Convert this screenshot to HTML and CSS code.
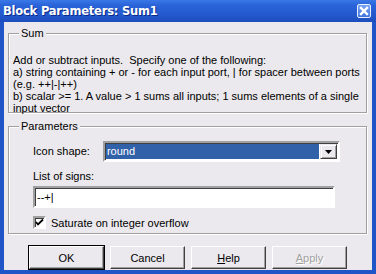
FILE: index.html
```html
<!DOCTYPE html>
<html>
  <head>
    <meta charset="utf-8">
    <title>Block Parameters: Sum1</title>
    <link rel="stylesheet" href="styles.css">
  </head>
  <body>
    <div class="window">
      <div class="titlebar">
        <span class="title">Block Parameters: Sum1</span>
        <span class="close">
          <svg width="12" height="12" viewBox="0 0 12 12">
            <path d="M3 3 L9 9 M9 3 L3 9" stroke="#fff" stroke-width="2.4" stroke-linecap="square"/>
          </svg>
        </span>
      </div>

      <div class="client">
        <div class="group sum">
          <span class="legend">Sum</span>
          <p class="desc">Add or subtract inputs.&nbsp; Specify one of the following:<br>
          a) string containing + or - for each input port, | for spacer between ports<br>
          (e.g. ++|-|++)<br>
          b) scalar &gt;= 1. A value &gt; 1 sums all inputs; 1 sums elements of a single<br>
          input vector</p>
        </div>

        <div class="group params">
          <span class="legend">Parameters</span>
          <div class="row">
            <span class="label">Icon shape:</span>
            <div class="combo">
              <span class="combo-value">round</span>
              <span class="combo-btn">
                <svg width="7" height="4" viewBox="0 0 7 4"><path d="M0 0 H7 L3.5 4 Z" fill="#000"/></svg>
              </span>
            </div>
          </div>
          <div class="label signs">List of signs:</div>
          <div class="edit">--+|</div>
          <label class="check">
            <span class="box">
              <svg width="9" height="9" viewBox="0 0 9 9"><path d="M1 4 L3 6.5 L8 1.5" stroke="#000" stroke-width="1.8" fill="none"/></svg>
            </span>
            Saturate on integer overflow
          </label>
        </div>

        <div class="buttons">
          <button class="btn default">OK</button>
          <button class="btn">Cancel</button>
          <button class="btn"><u>H</u>elp</button>
          <button class="btn disabled"><u>A</u>pply</button>
        </div>
      </div>
    </div>
  </body>
</html>
```

FILE: styles.css
```css
body { margin: 0; font-family: "Liberation Sans", Arial, sans-serif; font-size: 11px; color: #000; }
.window { width: 376px; height: 274px; box-sizing: border-box; border: 0 solid #1f55c6; border-width: 0 4px 4px 4px; display: flex; flex-direction: column; }
.titlebar { height: 22px; display: flex; align-items: center; justify-content: space-between; margin: 0 -4px; padding: 0 5px 0 3px; background: linear-gradient(#3a78e8 0%, #2a63d8 25%, #2358cc 70%, #1d4dbd 100%); }
.title { color: #fff; font-family: "DejaVu Sans", sans-serif; font-weight: bold; font-size: 11.5px; letter-spacing: -0.2px; text-shadow: 1px 1px 0 #0a2a8a; }
.close { width: 14px; height: 14px; box-sizing: border-box; border: 1px solid #e8eefc; border-radius: 2px; background: linear-gradient(#7aa4f4, #3f74de); display: flex; align-items: center; justify-content: center; }
.client { flex: 1; background: #ebe9ed; padding: 11px 5px 0 4px; }
.group { border: 1px solid #a0a0a0; box-shadow: inset 1px 1px 0 #fff, 1px 1px 0 #fff; box-sizing: border-box; padding: 0 4px; }
.legend { display: inline-block; margin: -7px 0 0 6px; padding: 0 2px; line-height: 13px; background: #ebe9ed; vertical-align: top; }
.sum { height: 80px; }
.desc { margin: 8px 0 0 0; line-height: 12px; }
.params { margin-top: 13px; height: 108px; padding-left: 24px; }
.params .legend { margin-left: -14px; }
.row { display: flex; align-items: center; gap: 13px; margin-top: 2px; }
.label { line-height: 13px; }
.signs { margin-top: 8px; }
.combo { width: 237px; height: 21px; box-sizing: border-box; border: 2px solid; border-color: #a0a0a0 #fff #fff #a0a0a0; box-shadow: inset 1px 1px 0 #404040; display: flex; padding: 1px; background: #fff; }
.combo-value { flex: 1; background: #3161a9; color: #fff; padding-left: 1px; line-height: 15px; margin-right: 1px; }
.combo-btn { width: 17px; display: flex; align-items: center; justify-content: center; background: #ebe9ed; box-sizing: border-box; border: 1px solid; border-color: #ebe9ed #404040 #404040 #ebe9ed; box-shadow: inset 1px 1px 0 #fff, inset -1px -1px 0 #a0a0a0; }
.edit { width: 302px; height: 22px; box-sizing: border-box; margin-top: 3px; border: 2px solid; border-color: #a0a0a0 #fff #fff #a0a0a0; box-shadow: inset 1px 1px 0 #404040; background: #fff; padding: 3px 2px; line-height: 13px; }
.check { display: flex; align-items: center; gap: 5px; margin-top: 8px; }
.box { width: 13px; height: 13px; box-sizing: border-box; border: 2px solid; border-color: #a0a0a0 #fff #fff #a0a0a0; box-shadow: inset 1px 1px 0 #404040; background: #fff; display: flex; align-items: center; justify-content: center; }
.buttons { display: flex; gap: 6px; margin-top: 12px; padding-left: 21px; }
.btn { width: 75px; height: 23px; font: inherit; color: #000; background: #ebe9ed; border: 1px solid; border-color: #fff #404040 #404040 #fff; box-shadow: inset -1px -1px 0 #a0a0a0; padding: 0; }
.btn.default { outline: 1px solid #000; }
.btn.disabled { color: #a0a0a0; text-shadow: 1px 1px 0 #fff; }
```
